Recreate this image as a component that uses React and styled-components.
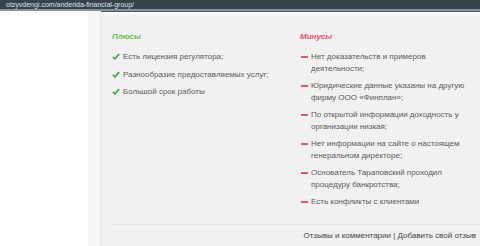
import styled, { createGlobalStyle } from "styled-components";

const GlobalStyle = createGlobalStyle`
  html, body {
    margin: 0;
    padding: 0;
    background: #ffffff;
    font-family: "Liberation Sans", Arial, sans-serif;
    overflow: hidden;
  }
`;

const Page = styled.div`
  width: 480px;
  height: 246px;
  display: flex;
  flex-direction: column;
  overflow: hidden;
`;

const AddressBar = styled.div`
  height: 9px;
  background: #36424c;
  color: #dde3e8;
  font-size: 7px;
  line-height: 9px;
  padding-left: 6px;
  white-space: nowrap;
  border-bottom: 2px solid #85939d;
  box-shadow: 0 1px 0 #4a5660;
`;

const Main = styled.div`
  flex: 1;
  display: flex;
  min-height: 0;
`;

const Sidebar = styled.div`
  width: 88px;
  background: #ffffff;
`;

const Gutter = styled.div`
  width: 12px;
  background: #f8f8f8;
  border-right: 1px solid #e8e8e8;
`;

const Panel = styled.div`
  flex: 1;
  margin-top: 3px;
  background: #f1f1f1;
  display: flex;
  flex-direction: column;
  min-width: 0;
`;

const Columns = styled.div`
  display: grid;
  grid-template-columns: 188px 1fr;
  padding: 17px 6px 0 11px;
  flex: 1;
`;

const Heading = styled.div`
  font-size: 8px;
  font-style: italic;
  font-weight: bold;
  color: ${(p) => (p.$good ? "#6cb84e" : "#df4f6e")};
  margin-bottom: 9px;
  line-height: 11px;
`;

const List = styled.ul`
  list-style: none;
  margin: 0;
  padding: 0;
`;

const Item = styled.li`
  display: flex;
  align-items: flex-start;
  gap: 3px;
  font-size: 8px;
  line-height: 11.5px;
  color: #5a5a5a;
  margin-bottom: 6px;
`;

const Marker = styled.span`
  flex: none;
  width: 8px;
  height: 11.5px;
  display: flex;
  align-items: center;
  justify-content: center;
`;

const Dash = styled.span`
  display: block;
  width: 7px;
  height: 2px;
  background: #e0566f;
`;

const Text = styled.span`
  flex: 1;
`;

const Footer = styled.div`
  margin-left: 11px;
  border-top: 1px solid #e6e6e6;
  height: 21px;
  display: flex;
  align-items: center;
  justify-content: flex-end;
  padding-right: 4px;
  font-size: 8px;
  color: #444444;
  white-space: nowrap;
  overflow: hidden;
`;

function Check() {
  return (
    <svg width="8" height="7" viewBox="0 0 8 7">
      <path d="M0.8 3.8 L3 5.8 L7.2 1" fill="none" stroke="#4aa548" strokeWidth="1.8" />
    </svg>
  );
}

const pluses = [
  "Есть лицензия регулятора;",
  "Разнообразие предоставляемых услуг;",
  "Большой срок работы",
];

const minuses = [
  "Нет доказательств и примеров деятельности;",
  "Юридические данные указаны на другую фирму ООО «Финплан»;",
  "По открытой информации доходность у организации низкая;",
  "Нет информации на сайте о настоящем генеральном директоре;",
  "Основатель Тараповский проходил процедуру банкротства;",
  "Есть конфликты с клиентами",
];

export default function App() {
  return (
    <Page>
      <GlobalStyle />
      <AddressBar>otzyvdengi.com/anderida-financial-group/</AddressBar>
      <Main>
        <Sidebar />
        <Gutter />
        <Panel>
          <Columns>
            <div>
              <Heading $good>Плюсы</Heading>
              <List>
                {pluses.map((t) => (
                  <Item key={t}>
                    <Marker>
                      <Check />
                    </Marker>
                    <Text>{t}</Text>
                  </Item>
                ))}
              </List>
            </div>
            <div>
              <Heading>Минусы</Heading>
              <List>
                {minuses.map((t) => (
                  <Item key={t}>
                    <Marker>
                      <Dash />
                    </Marker>
                    <Text>{t}</Text>
                  </Item>
                ))}
              </List>
            </div>
          </Columns>
          <Footer>Отзывы и комментарии | Добавить свой отзыв</Footer>
        </Panel>
      </Main>
    </Page>
  );
}
